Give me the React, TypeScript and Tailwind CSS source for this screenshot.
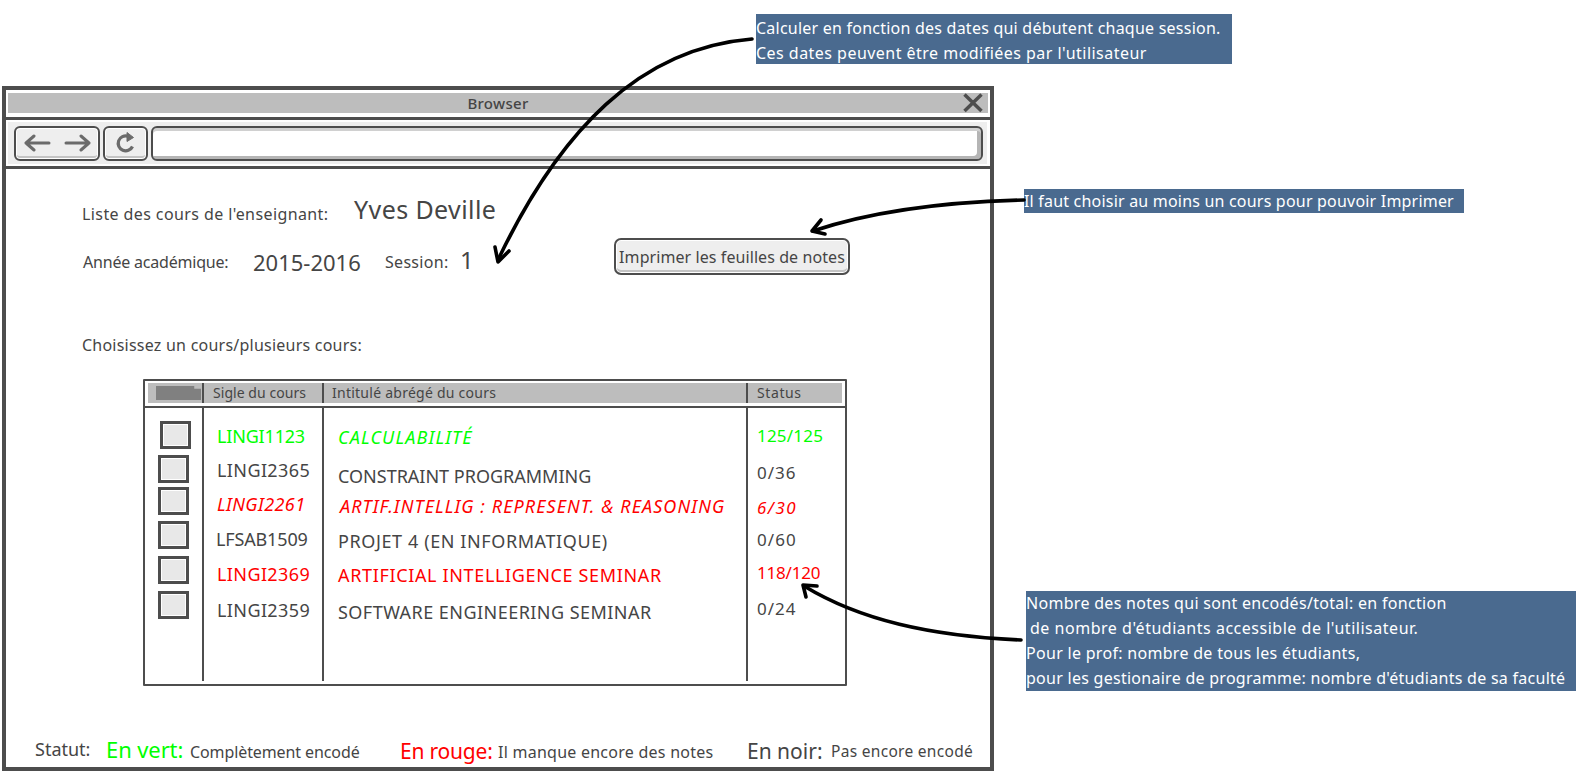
const font = { fontFamily: '"Comic Sans MS", "Noto Sans", sans-serif' };

const G = 'text-[#00ff00]';
const R = 'text-[#ff0000]';
const K = 'text-[#454545]';

const boxes = [
  'mt-[13px] ml-[2px]',
  'mt-[6px]',
  'mt-[4px]',
  'mt-[6px]',
  'mt-[7px]',
  'mt-[7px]',
];
const codes = [
  { t: 'LINGI1123', c: `text-[18px] ${G} mt-[16px] -tracking-[0.18px]` },
  { t: 'LINGI2365', c: `text-[18px] ${K} mt-[10px] tracking-[0.39px]` },
  { t: 'LINGI2261', c: `text-[18px] ${R} mt-[10px] italic tracking-[0.4px]` },
  { t: 'LFSAB1509', c: `text-[18px] ${K} mt-[11px] -ml-px -tracking-[0.15px]` },
  { t: 'LINGI2369', c: `text-[18px] ${R} mt-[11px] tracking-[0.39px]` },
  { t: 'LINGI2359', c: `text-[18px] ${K} mt-[12px] tracking-[0.39px]` },
];
const titles = [
  { t: 'CALCULABILITÉ', c: `text-[18px] ${G} mt-[17px] italic tracking-[1.15px]` },
  { t: 'CONSTRAINT PROGRAMMING', c: `text-[18px] ${K} mt-[15px]` },
  { t: 'ARTIF.INTELLIG : REPRESENT. & REASONING', c: `text-[18px] ${R} mt-[6px] ml-[2px] italic tracking-[1.08px]` },
  { t: 'PROJET 4 (EN INFORMATIQUE)', c: `text-[18px] ${K} mt-[11px] tracking-[0.6px]` },
  { t: 'ARTIFICIAL INTELLIGENCE SEMINAR', c: `text-[18px] ${R} mt-[10px] tracking-[0.65px]` },
  { t: 'SOFTWARE ENGINEERING SEMINAR', c: `text-[18px] ${K} mt-[13px] tracking-[0.46px]` },
];
const statuses = [
  { t: '125/125', c: `text-[17px] ${G} mt-[16px] tracking-[0.2px]` },
  { t: '0/36', c: `text-[17px] ${K} mt-[13px] tracking-[1px]` },
  { t: '6/30', c: `text-[17px] ${R} mt-[11px] italic tracking-[1.5px]` },
  { t: '0/60', c: `text-[17px] ${K} mt-[8px] tracking-[1.1px]` },
  { t: '118/120', c: `text-[17px] ${R} mt-[9px] -tracking-[0.2px]` },
  { t: '0/24', c: `text-[17px] ${K} mt-[12px] tracking-[1px]` },
];

function Checkbox({ className }: { className: string }) {
  return (
    <div className={`w-[31px] h-[28px] border-[3px] border-[#4d4d4d] bg-white p-px ${className}`}>
      <div className="w-full h-full bg-[#e8e8e8]" />
    </div>
  );
}

function TextColumn({ items }: { items: { t: string; c: string }[] }) {
  return (
    <>
      {items.map((i) => (
        <div key={i.t} className={`h-[24px] leading-[24px] whitespace-nowrap ${i.c}`}>
          {i.t}
        </div>
      ))}
    </>
  );
}

function Arrows() {
  return (
    <svg className="absolute left-0 top-0 pointer-events-none" width="1594" height="775" fill="none" stroke="#000" strokeLinecap="round" strokeLinejoin="round">
      <g strokeWidth="3.6">
        <path d="M752 39 C640 48 560 130 498 260" />
        <path d="M495 247 L498 262 L509 251" />
        <path d="M1024 200 C940 202 870 212 813 231" />
        <path d="M821 220 L812 231 L825 234" />
        <path d="M1021 640 C930 636 860 620 804 586" />
        <path d="M817 586 L803 585 L806 597" />
      </g>
    </svg>
  );
}

export default function App() {
  return (
    <div className="relative w-[1594px] h-[775px] bg-white overflow-hidden" style={font}>
      <div className="pt-[86px] pl-[2px]">
        <div className="w-[992px] h-[685px] border-[4px] border-[#4d4d4d] flex flex-col">
          {/* title bar */}
          <div className="pt-[3px] pb-[4px] pl-[2px] pr-[2px]">
            <div className="relative h-[20px] bg-[#bdbdbd] flex items-center justify-center text-[15px] font-medium tracking-[0.3px] text-[#454545]">
              Browser
              <svg className="absolute right-[5px] top-0" width="20" height="20" viewBox="0 0 20 20" stroke="#4d4d4d" strokeWidth="3.5" fill="none">
                <path d="M1.5 1.5 L18.5 18 M18.5 1.5 L1.5 18" />
              </svg>
            </div>
          </div>
          {/* toolbar */}
          <div className="border-y-[3px] border-[#4d4d4d] py-[2px] pl-[2px] pr-[3px]">
            <div className="h-[42px] bg-[#eeeeee] flex items-center gap-[3px] pl-[6px] pr-[4px]">
              <div className="w-[86px] h-[35px] rounded-[6px] border-2 border-[#4d4d4d] bg-[#eeeeee] flex items-center justify-center gap-[11px] shadow-[inset_0_0_0_1px_#ffffff,inset_0_-3px_0_#c4c4c4]">
                <svg width="28" height="20" viewBox="0 0 28 20" fill="none" stroke="#6b6b6b" strokeWidth="3" strokeLinecap="round" strokeLinejoin="round">
                  <path d="M2 10 H25 M10 3 L2 10 L10 17" />
                </svg>
                <svg width="28" height="20" viewBox="0 0 28 20" fill="none" stroke="#6b6b6b" strokeWidth="3" strokeLinecap="round" strokeLinejoin="round">
                  <path d="M3 10 H26 M18 3 L26 10 L18 17" />
                </svg>
              </div>
              <div className="w-[45px] h-[35px] rounded-[6px] border-2 border-[#4d4d4d] bg-[#eeeeee] flex items-center justify-center shadow-[inset_0_0_0_1px_#ffffff,inset_0_-3px_0_#c4c4c4]">
                <svg width="22" height="22" viewBox="0 0 22 22" fill="none" stroke="#6b6b6b" strokeWidth="3.2">
                  <path d="M17.5 14.5 A7.5 7.5 0 1 1 13 4.2" />
                  <path d="M12 0.5 L18.5 5.5 L12 9.5 Z" fill="#6b6b6b" strokeWidth="1" />
                </svg>
              </div>
              <div className="flex-1 h-[35px] rounded-[6px] border-2 border-[#4d4d4d] bg-white shadow-[inset_0_3px_0_#d0d0d0,inset_-4px_-3px_0_#b5b5b5]" />
            </div>
          </div>

          {/* content */}
          <div className="flex-1 flex flex-col pt-[33px] text-[#454545]">
            <div className="flex items-center h-[24px] pl-[76px]">
              <span className="w-[272px] text-[16px] tracking-[0.4px] whitespace-nowrap">Liste des cours de l'enseignant:</span>
              <span className="text-[25px] -mt-[8px] tracking-[0.4px] whitespace-nowrap">Yves Deville</span>
            </div>
            <div className="flex items-center h-[48px] mt-[12px] pl-[77px]">
              <span className="w-[170px] text-[16px] -tracking-[0.2px] whitespace-nowrap">Année académique:</span>
              <span className="w-[132px] text-[22px] whitespace-nowrap">2015-2016</span>
              <span className="w-[75px] text-[16px] tracking-[0.3px] whitespace-nowrap">Session:</span>
              <span className="w-[154px] text-[24px] -mt-[4px] whitespace-nowrap">1</span>
              <div className="self-start w-[236px] h-[37px] rounded-[7px] border-2 border-[#4d4d4d] bg-[#eeeeee] flex items-center justify-center text-[16px] tracking-[0.08px] whitespace-nowrap shadow-[inset_0_0_0_1px_#ffffff,inset_0_-3px_0_#c4c4c4]">
                Imprimer les feuilles de notes
              </div>
            </div>
            <div className="h-[24px] leading-[24px] mt-[47px] pl-[76px] text-[16px] tracking-[0.23px]">Choisissez un cours/plusieurs cours:</div>

            {/* table */}
            <div className="ml-[137px] mt-[22px] w-[704px] h-[307px] border-2 border-[#4d4d4d] rounded-[1px]">
              <div className="pt-[2px] pb-[3px] px-[3px] border-b-2 border-[#4d4d4d] flex text-[14px] h-[27px]">
                <div className="w-[56px] h-[20px] bg-[#bdbdbd] border-r-2 border-[#4d4d4d] pl-[8px] pt-[3px]">
                  <div className="w-[45px] h-[14px] bg-[#808080] [clip-path:polygon(0_0,85%_0,85%_20%,100%_20%,100%_100%,0_100%)]" />
                </div>
                <div className="w-[120px] h-[20px] leading-[20px] bg-[#bdbdbd] border-r-2 border-[#4d4d4d] pl-[9px] whitespace-nowrap tracking-[0.05px]">Sigle du cours</div>
                <div className="w-[424px] h-[20px] leading-[20px] bg-[#bdbdbd] border-r-2 border-[#4d4d4d] pl-[8px] whitespace-nowrap tracking-[0.25px]">Intitulé abrégé du cours</div>
                <div className="flex-1 h-[20px] leading-[20px] bg-[#bdbdbd] pl-[9px] tracking-[0.6px]">Status</div>
              </div>
              <div className="flex h-[273px]">
                <div className="w-[59px] border-r-2 border-[#4d4d4d] pl-[13px]">
                  {boxes.map((b, i) => (
                    <Checkbox key={i} className={b} />
                  ))}
                </div>
                <div className="w-[120px] border-r-2 border-[#4d4d4d] pl-[13px]">
                  <TextColumn items={codes} />
                </div>
                <div className="w-[424px] border-r-2 border-[#4d4d4d] pl-[14px]">
                  <TextColumn items={titles} />
                </div>
                <div className="flex-1 pl-[9px]">
                  <TextColumn items={statuses} />
                </div>
              </div>
            </div>

            {/* legend */}
            <div className="mt-auto h-[30px] flex items-center pl-[29px] whitespace-nowrap">
              <span className="w-[71px] text-[18px] -mt-[5px]">Statut:</span>
              <span className={`w-[84px] text-[22px] -tracking-[0.1px] -mt-[5px] ${G}`}>En vert:</span>
              <span className="w-[210px] text-[16px] -tracking-[0.1px]">Complètement encodé</span>
              <span className={`w-[98px] text-[21px] -tracking-[0.2px] ${R}`}>En rouge:</span>
              <span className="w-[249px] text-[16px] tracking-[0.25px]">Il manque encore des notes</span>
              <span className="w-[84px] text-[21px]">En noir:</span>
              <span className="text-[15.5px] tracking-[0.3px]">Pas encore encodé</span>
            </div>
          </div>
        </div>
      </div>

      {/* annotations */}
      <div className="absolute left-[756px] top-[14px] w-[476px] h-[50px] pt-[2px] bg-[#4a6a8f] text-white text-[16px] leading-[25px] whitespace-nowrap">
        <div className="tracking-[0.23px]">Calculer en fonction des dates qui débutent chaque session.</div>
        <div className="tracking-[0.47px]">Ces dates peuvent être modifiées par l'utilisateur</div>
      </div>
      <div className="absolute left-[1024px] top-[189px] w-[440px] h-[24px] bg-[#4a6a8f] text-white text-[16px] leading-[24px] tracking-[0.2px] whitespace-nowrap">
        Il faut choisir au moins un cours pour pouvoir Imprimer
      </div>
      <div className="absolute left-[1026px] top-[591px] w-[550px] h-[100px] bg-[#4a6a8f] text-white text-[16px] leading-[25px] whitespace-nowrap">
        <div className="tracking-[0.3px]">Nombre des notes qui sont encodés/total: en fonction</div>
        <div className="pl-[4px] tracking-[0.52px]">de nombre d'étudiants accessible de l'utilisateur.</div>
        <div className="tracking-[0.3px]">Pour le prof: nombre de tous les étudiants,</div>
        <div className="tracking-[0.27px]">pour les gestionaire de programme: nombre d'étudiants de sa faculté</div>
      </div>

      <Arrows />
    </div>
  );
}
